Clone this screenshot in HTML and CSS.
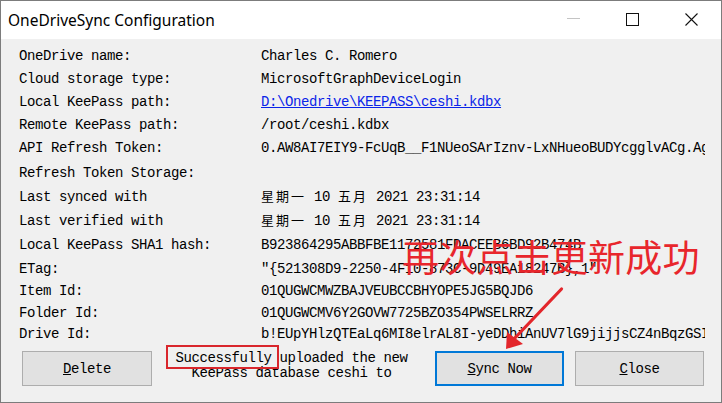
FILE: index.html
```html
<!DOCTYPE html>
<html lang="en">
<head>
<meta charset="utf-8">
<title>OneDriveSync Configuration</title>
<link rel="stylesheet" href="styles.css">
</head>
<body>
<div class="window">
  <div class="titlebar">
    <span class="title">OneDriveSync Configuration</span>
    <div class="controls">
      <span class="ctl"><svg width="13" height="13" viewBox="0 0 13 13"><line x1="0" y1="5.5" x2="13" y2="5.5" stroke="#c4c4c4" stroke-width="1"/></svg></span>
      <span class="ctl"><svg width="13" height="13" viewBox="0 0 13 13"><rect x="0.5" y="0.5" width="12" height="12" fill="none" stroke="#111" stroke-width="1"/></svg></span>
      <span class="ctl"><svg width="13" height="13" viewBox="0 0 13 13"><path d="M0.5 0.5 L12.5 12.5 M12.5 0.5 L0.5 12.5" stroke="#111" stroke-width="1.1" fill="none"/></svg></span>
    </div>
  </div>
  <div class="content">
    <div class="grid">
      <div class="label">OneDrive name:</div><div class="value">Charles C. Romero</div>
      <div class="label">Cloud storage type:</div><div class="value">MicrosoftGraphDeviceLogin</div>
      <div class="label">Local KeePass path:</div><div class="value"><a class="link" href="#">D:\Onedrive\KEEPASS\ceshi.kdbx</a></div>
      <div class="label">Remote KeePass path:</div><div class="value">/root/ceshi.kdbx</div>
      <div class="label">API Refresh Token:</div><div class="value">0.AW8AI7EIY9-FcUqB__F1NUeoSArIznv-LxNHueoBUDYcgglvACg.AgABAAAAAAD</div>
      <div class="label">Refresh Token Storage:</div><div class="value"></div>
      <div class="label">Last synced with</div><div class="value"><span class="cjk">星期一</span> 10 <span class="cjk">五月</span> 2021 23:31:14</div>
      <div class="label">Last verified with</div><div class="value"><span class="cjk">星期一</span> 10 <span class="cjk">五月</span> 2021 23:31:14</div>
      <div class="label">Local KeePass SHA1 hash:</div><div class="value">B923864295ABBFBE1172581FDACEEB6BD92B474B</div>
      <div class="label">ETag:</div><div class="value">″{521308D9-2250-4F10-873C-9D49EA18247B},1″</div>
      <div class="label">Item Id:</div><div class="value">01QUGWCMWZBAJVEUBCCBHYOPE5JG5BQJD6</div>
      <div class="label">Folder Id:</div><div class="value">01QUGWCMV6Y2GOVW7725BZO354PWSELRRZ</div>
      <div class="label">Drive Id:</div><div class="value">b!EUpYHlzQTEaLq6MI8elrAL8I-yeDDhiAnUV7lG9jijjsCZ4nBqzGSIabc</div>
    </div>
    <div class="footer">
      <button class="btn"><u>D</u>elete</button>
      <div class="status"><span class="hl">Successfully</span> uploaded the new<br>KeePass database ceshi to</div>
      <button class="btn btn-default"><u>S</u>ync Now</button>
      <button class="btn btn-close"><u>C</u>lose</button>
    </div>
  </div>
  <div class="annotation">
    <div class="note">再次点击更新成功</div>
    <svg class="arrow" width="722" height="403" viewBox="0 0 722 403">
      <path d="M561.5 289 L513 340" stroke="#e3262b" stroke-width="3.2" stroke-linecap="round" fill="none"/>
      <polygon points="506,349 507,332 523,344" fill="#e3262b"/>
    </svg>
  </div>
</div>
</body>
</html>
```

FILE: styles.css
```css
html, body {
  margin: 0;
  padding: 0;
  background: #f0f0f0;
}

.window {
  position: relative;
  width: 722px;
  height: 403px;
  box-sizing: border-box;
  border: 1px solid #7c7c7c;
  background: #f0f0f0;
  overflow: hidden;
  font-family: "Liberation Mono", "Noto Sans CJK SC", monospace;
  font-size: 14px;
  letter-spacing: -0.4px;
  color: #000;
}

.titlebar {
  height: 38px;
  background: #fff;
  display: flex;
  align-items: center;
  justify-content: space-between;
  padding-left: 7px;
  padding-bottom: 1px;
  box-sizing: border-box;
}

.title {
  font-family: "Noto Sans", "Open Sans", sans-serif;
  font-size: 15.5px;
  letter-spacing: 0;
  color: #000;
}

.controls {
  display: flex;
  height: 100%;
}

.ctl {
  width: 59px;
  display: flex;
  align-items: center;
  justify-content: center;
}

.ctl svg {
  display: block;
}

.content {
  padding: 6px 16px 0 18px;
}

.grid {
  display: grid;
  grid-template-columns: 241px 1fr;
  grid-template-rows: 22px 23px 23px 23px 24px 25px 24px 24px 24px 23px 22px 21px 22px;
  align-items: center;
}

.label, .value {
  white-space: nowrap;
  overflow: hidden;
  line-height: 20px;
}

.value {
  padding-left: 1px;
}

.link {
  color: #0a24e8;
  text-decoration: underline;
}

.cjk {
  font-family: "Noto Sans CJK SC", sans-serif;
  font-size: 13px;
  line-height: 16px;
  letter-spacing: 2px;
}

.footer {
  display: flex;
  align-items: flex-start;
  margin-top: 6px;
  padding-left: 3px;
  padding-right: 1px;
}

.btn {
  width: 130px;
  height: 35px;
  background: #e1e1e1;
  border: 1px solid #adadad;
  font-family: inherit;
  font-size: 14px;
  letter-spacing: -0.4px;
  color: #000;
  padding: 0;
  margin: 0;
}

.btn-default {
  width: 129px;
  border: 2px solid #0078d7;
}

.btn-close {
  width: 129px;
  margin-left: 11px;
}

.status {
  flex: 1;
  text-align: center;
  line-height: 15px;
  white-space: nowrap;
  padding-right: 4px;
}

.hl {
  position: relative;
}

.hl::after {
  content: "";
  position: absolute;
  left: -9px;
  right: -7px;
  top: -5px;
  bottom: -3px;
  border: 2px solid #d9262c;
}

.annotation {
  position: absolute;
  left: 0;
  top: 0;
  width: 722px;
  height: 403px;
  pointer-events: none;
}

.note {
  position: absolute;
  left: 401px;
  top: 237px;
  font-family: "Noto Sans CJK SC", sans-serif;
  font-size: 37px;
  line-height: 37px;
  letter-spacing: 0.2px;
  color: #e8262c;
  white-space: nowrap;
}

.arrow {
  position: absolute;
  left: -1px;
  top: -1px;
}
```
